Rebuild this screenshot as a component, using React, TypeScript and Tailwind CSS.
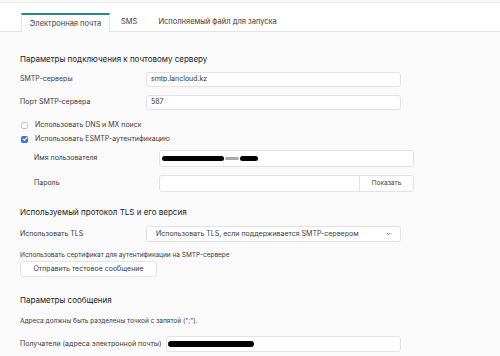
import React from 'react';

const font = { fontFamily: 'Inter, "Noto Sans", sans-serif' };

function Field({ value, className = '' }: { value?: React.ReactNode; className?: string }) {
  return (
    <div className={`h-[15px] bg-white border border-[#e3e3e6] rounded-[3px] flex items-center px-[4px] text-[7px] text-[#333] ${className}`}>
      {value}
    </div>
  );
}

function Redacted({ w }: { w: string }) {
  return <div className={`h-[5px] bg-black rounded-full ${w}`} />;
}

export default function App() {
  return (
    <div className="w-[500px] h-[356px] bg-[#fafafa] overflow-hidden text-[#3a3a3a] whitespace-nowrap" style={font}>
      {/* tabs */}
      <div className="bg-white border-t border-[#ececee] mt-[2px] h-[30px] border-b border-b-[#e3e3e6] flex items-end pl-[21px]">
        <div className="w-[89px] h-[19px] -mb-px bg-white border-t-2 border-t-[#2a8a7a] border-x border-x-[#e6e6e8] flex items-center justify-center text-[7.5px]">
          Электронная почта
        </div>
        <div className="h-[19px] px-[11px] flex items-center text-[7.5px]">SMS</div>
        <div className="h-[19px] px-[10px] flex items-center text-[7.5px]">Исполняемый файл для запуска</div>
      </div>

      <div className="pl-[20px] pt-[21px]">
        <div className="text-[8px] leading-[12px] text-[#222]">Параметры подключения к почтовому серверу</div>

        <div className="flex items-center mt-[7px]">
          <div className="w-[126px] text-[7px]">SMTP-серверы</div>
          <Field className="w-[255px]" value="smtp.lancloud.kz" />
        </div>
        <div className="flex items-center mt-[8px]">
          <div className="w-[126px] text-[7px]">Порт SMTP-сервера</div>
          <Field className="w-[255px]" value="587" />
        </div>

        <div className="flex items-center mt-[11px] h-[8px] gap-[7px] pl-[1px]">
          <div className="w-[7px] h-[7px] border border-[#c4c4c8] rounded-[2px] bg-white" />
          <div className="text-[7px]">Использовать DNS и MX поиск</div>
        </div>
        <div className="flex items-center mt-[6px] h-[8px] gap-[7px] pl-[1px]">
          <div className="w-[7px] h-[7px] rounded-[2px] bg-[#3b73d9] flex items-center justify-center">
            <svg width="6" height="6" viewBox="0 0 10 10" fill="none">
              <path d="M2 5.2l2 2 4-4.4" stroke="white" strokeWidth="1.8" strokeLinecap="round" strokeLinejoin="round" />
            </svg>
          </div>
          <div className="text-[7px]">Использовать ESMTP-аутентификацию</div>
        </div>

        <div className="flex items-center mt-[7px] pl-[14px]">
          <div className="w-[125px] text-[7px]">Имя пользователя</div>
          <div className="w-[255px] h-[17px] bg-white border border-[#e3e3e6] rounded-[3px] flex items-center gap-[1px] px-[2px]">
            <Redacted w="w-[62px]" />
            <div className="h-[3px] w-[14px] bg-[#aaa] rounded-full" />
            <Redacted w="w-[18px]" />
          </div>
        </div>
        <div className="flex items-center mt-[8px] pl-[14px]">
          <div className="w-[125px] text-[7px]">Пароль</div>
          <div className="w-[255px] h-[17px] bg-white border border-[#e3e3e6] rounded-[3px] flex">
            <div className="flex-1" />
            <div className="w-[54px] border-l border-[#e3e3e6] flex items-center justify-center text-[6.5px]">Показать</div>
          </div>
        </div>

        <div className="text-[8px] leading-[12px] text-[#222] mt-[14px]">Используемый протокол TLS и его версия</div>
        <div className="flex items-center mt-[8px]">
          <div className="w-[126px] text-[7px]">Использовать TLS</div>
          <div className="w-[255px] h-[16px] bg-white border border-[#e3e3e6] rounded-[3px] flex items-center justify-between pl-[9px] pr-[9px] text-[7px]">
            <span>Использовать TLS, если поддерживается SMTP-сервером</span>
            <svg width="5" height="4" viewBox="0 0 10 8" fill="none">
              <path d="M1.5 2l3.5 3.5L8.5 2" stroke="#666" strokeWidth="2" />
            </svg>
          </div>
        </div>
        <div className="text-[6.5px] mt-[8px] leading-[10px]">Использовать сертификат для аутентификации на SMTP-сервере</div>
        <div className="w-[137px] h-[16px] mt-[1px] bg-white border border-[#e3e3e6] rounded-[3px] flex items-center justify-center text-[7px]">
          Отправить тестовое сообщение
        </div>

        <div className="text-[8px] leading-[12px] text-[#222] mt-[17px]">Параметры сообщения</div>
        <div className="text-[6.5px] leading-[10px] mt-[10px]">Адреса должны быть разделены точкой с запятой (";").</div>
        <div className="flex items-center mt-[10px]">
          <div className="w-[146px] text-[7px]">Получатели (адреса электронной почты)</div>
          <div className="w-[235px] h-[16px] bg-white border border-[#e3e3e6] rounded-[3px] flex items-center px-[1px]">
            <Redacted w="w-[86px] h-[6px]" />
          </div>
        </div>
      </div>
    </div>
  );
}
